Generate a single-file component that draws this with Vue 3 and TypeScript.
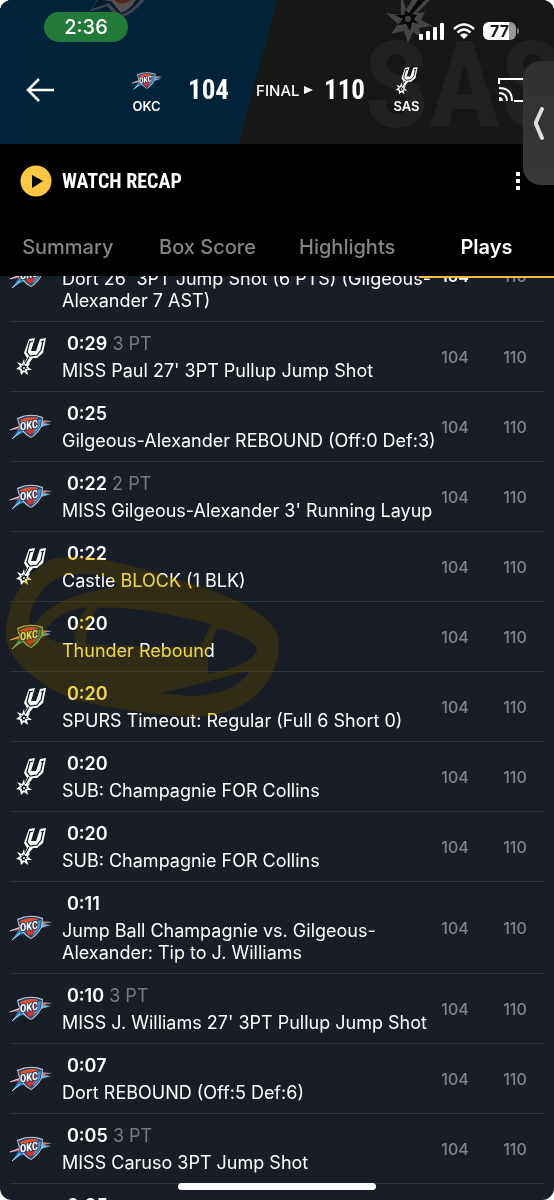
<script setup lang="ts">
interface Play {
  team: 'okc' | 'sas'
  time: string
  points?: string
  text: string
  okc: number
  sas: number
  scored?: boolean
}

const tabs = ['Summary', 'Box Score', 'Highlights', 'Plays']
const activeTab = 'Plays'

const plays: Play[] = [
  { team: 'okc', time: '0:35', points: '3 PT', text: "Dort 26' 3PT Jump Shot (6 PTS) (Gilgeous-Alexander 7 AST)", okc: 104, sas: 110, scored: true },
  { team: 'sas', time: '0:29', points: '3 PT', text: "MISS Paul 27' 3PT Pullup Jump Shot", okc: 104, sas: 110 },
  { team: 'okc', time: '0:25', text: 'Gilgeous-Alexander REBOUND (Off:0 Def:3)', okc: 104, sas: 110 },
  { team: 'okc', time: '0:22', points: '2 PT', text: "MISS Gilgeous-Alexander 3' Running Layup", okc: 104, sas: 110 },
  { team: 'sas', time: '0:22', text: 'Castle BLOCK (1 BLK)', okc: 104, sas: 110 },
  { team: 'okc', time: '0:20', text: 'Thunder Rebound', okc: 104, sas: 110 },
  { team: 'sas', time: '0:20', text: 'SPURS Timeout: Regular (Full 6 Short 0)', okc: 104, sas: 110 },
  { team: 'sas', time: '0:20', text: 'SUB: Champagnie FOR Collins', okc: 104, sas: 110 },
  { team: 'sas', time: '0:20', text: 'SUB: Champagnie FOR Collins', okc: 104, sas: 110 },
  { team: 'okc', time: '0:11', text: 'Jump Ball Champagnie vs. Gilgeous-Alexander: Tip to J. Williams', okc: 104, sas: 110 },
  { team: 'okc', time: '0:10', points: '3 PT', text: "MISS J. Williams 27' 3PT Pullup Jump Shot", okc: 104, sas: 110 },
  { team: 'okc', time: '0:07', text: 'Dort REBOUND (Off:5 Def:6)', okc: 104, sas: 110 },
  { team: 'okc', time: '0:05', points: '3 PT', text: 'MISS Caruso 3PT Jump Shot', okc: 104, sas: 110 },
  { team: 'sas', time: '0:05', text: 'SPURS Rebound', okc: 104, sas: 110 },
]
</script>

<template>
  <svg class="defs" aria-hidden="true">
    <defs>
      <symbol id="logo-okc" viewBox="0 0 42 26">
        <path d="M0 16L14 10L12 15Z" fill="#e0535a" />
        <path d="M2 25L10 13L20 16L10 20Z" fill="#2b86c5" />
        <path d="M28 6L42 7L33 9L41 10L28 14Z" fill="#6fb1dc" />
        <path d="M30 7L42 7L32 9Z" fill="#ef6a5c" />
        <path d="M2 25L10 18M0 16L11 12" stroke="#dce8f2" stroke-width="1" fill="none" />
        <path d="M7 4Q20 -2 33 3L32 12Q28 20 21 24Q9 18 7 4Z" fill="#c9ced8" />
        <path d="M8 5Q20 -1 32 4L31 12Q27 19 21 23Q11 17 8 5Z" fill="#24426e" />
        <path d="M10 6Q20 1 28 4L26 9L12 11Z" fill="#e8502f" />
        <path d="M13 14L28 8L26 16L20 21Z" fill="#d8342f" />
        <path d="M28 6L31 5L30 12Q27 18 22 21L26 14Z" fill="#3a9bd8" />
        <text x="19" y="15" text-anchor="middle" transform="rotate(-10 19 12)" font-family="Roboto Condensed, Liberation Sans, sans-serif" font-size="11" font-weight="700" font-style="italic" fill="#fff" stroke="#263450" stroke-width="1.500" paint-order="stroke">OKC</text>
      </symbol>
      <symbol id="logo-sas" viewBox="0 0 31 38">
        <path d="M13 1L19 0L15 13L20 13L24 1L30 0L27 15L21 20L17 20L10 29L7 28L11 20L8 15Z" fill="#fff" />
        <path d="M14 3L11 14L14 18L21 17L25 12L27 3" fill="none" stroke="#10141b" stroke-width="1.200" />
        <path d="M14 4L17 3M25 4L28 3M13 19L9 26" stroke="#10141b" stroke-width="1.200" />
        <path d="M8 21L9 27L14 25L12 29L16 32L11 32L12 37L8 34L5 37L4 32L0 31L4 28L1 24L6 26Z" fill="#fff" />
        <path d="M8 26L9 28L11 28L10 30L12 31L9 31L9 33L8 32L6 33L6 31L4 30L6 29L5 27L7 28Z" fill="#10141b" />
        <circle cx="8" cy="30" r="1" fill="#fff" />
      </symbol>
    </defs>
  </svg>

  <div class="screen">
    <header class="top">
      <div class="score-header">
        <div class="backdrop" aria-hidden="true">
          <div class="backdrop-okc"></div>
          <span class="backdrop-name">SAS</span>
          <svg class="ghost-okc" viewBox="0 0 66 18">
            <path d="M10 0L4 10L0 12L12 9L20 6L31 18Q45 16 58 0Z" fill="#3e434b" />
            <path d="M11 0L5 9L22 3L33 15Q44 12 53 0Z" fill="#07192c" />
            <path d="M15 0L24 1L34 13Q43 10 49 0Z" fill="#564e50" />
            <path d="M27 0Q35 7 44 0Z" fill="#53261f" />
          </svg>
          <svg class="ghost-sas" viewBox="0 0 52 44">
            <path d="M17 0L20 10L26 0H44L31 13L39 12L35 20L47 26L33 28L36 38L27 32L22 43L18 31L5 34L12 24L0 13L15 15L15 0Z" fill="#454545" />
            <path d="M32 0H39L26 14L31 15L28 19L33 24L26 22L24 31L20 24L12 25L17 19L9 15L18 15L19 10L23 13Z" fill="#090909" />
            <circle cx="22" cy="19" r="3" fill="#454545" />
          </svg>
        </div>

        <div class="status">
          <span class="clock">2:36</span>
          <div class="indicators">
            <svg class="signal" viewBox="0 0 26 17" aria-label="Signal" role="img">
              <rect x="0" y="11" width="4" height="6" rx="1" />
              <rect x="7" y="8" width="4" height="9" rx="1" />
              <rect x="14" y="4" width="4" height="13" rx="1" />
              <rect x="21" y="0" width="4" height="17" rx="1" />
            </svg>
            <svg class="wifi" viewBox="0 0 22 16" aria-label="Wi-Fi" role="img">
              <path d="M1 6Q11 -3 21 6M4.500 9.500Q11 3.500 17.500 9.500" fill="none" stroke="#fff" stroke-width="2.600" />
              <path d="M7 12Q11 8.500 15 12L11 16Z" fill="#fff" />
            </svg>
            <span class="battery">77</span>
          </div>
        </div>

        <div class="matchup">
          <div class="side">
            <button class="icon-button" type="button" aria-label="Back">
              <svg width="30" height="26" viewBox="0 0 30 26"><path d="M14 2L3 13L14 24M3 13H29" fill="none" stroke="#fff" stroke-width="2.500" /></svg>
            </button>
          </div>
          <div class="team">
            <svg class="team-okc"><use href="#logo-okc" /></svg>
            <span>OKC</span>
          </div>
          <strong class="total">104</strong>
          <div class="final">FINAL <svg width="9" height="8" viewBox="0 0 9 8"><path d="M0 0L9 4L0 8Z" fill="#fff" /></svg></div>
          <strong class="total">110</strong>
          <div class="team">
            <svg class="team-sas"><use href="#logo-sas" /></svg>
            <span>SAS</span>
          </div>
          <div class="side side-end">
            <button class="icon-button" type="button" aria-label="Cast">
              <svg width="30" height="24" viewBox="0 0 30 24" fill="none" stroke="#fff" stroke-width="2"><path d="M1 6V1H29V23H16M1 10Q14 10 14 23M1 15Q9 15 9 23" /><path d="M1 19Q5 19 5 23H1Z" fill="#fff" stroke="none" /></svg>
            </button>
          </div>
        </div>
      </div>

      <div class="recap">
        <button class="recap-button" type="button">
          <svg width="32" height="32" viewBox="0 0 32 32"><circle cx="16" cy="16" r="15.500" fill="#fdc944" /><path d="M12 10L23 16L12 23Z" fill="#050505" /></svg>
          Watch Recap
        </button>
        <button class="more" type="button" aria-label="More options">
          <svg width="4" height="18" viewBox="0 0 4 18" fill="#fff"><path d="M0 0H4V4H0ZM0 7H4V11H0ZM0 14H4V18H0Z" /></svg>
        </button>
      </div>

      <nav class="tabs">
        <a v-for="tab in tabs" :key="tab" href="#" :class="['tab', { active: tab === activeTab }]">{{ tab }}</a>
      </nav>
    </header>

    <main class="feed">
      <ol class="plays">
        <li v-for="(play, i) in plays" :key="i" class="play">
          <span class="play-logo"><svg :class="play.team"><use :href="'#logo-' + play.team" /></svg></span>
          <div class="play-body">
            <p class="play-time"><b>{{ play.time }}</b> <span v-if="play.points">{{ play.points }}</span></p>
            <p class="play-text">{{ play.text }}</p>
          </div>
          <span :class="['score', { scored: play.scored }]">{{ play.okc }}</span>
          <span class="score score-away">{{ play.sas }}</span>
        </li>
      </ol>
    </main>

    <svg v-for="layer in ['tint', 'glow']" :key="layer" :class="['marker', layer]" viewBox="0 0 290 190" aria-hidden="true">
      <path fill-rule="evenodd" d="M6 95C6 65 22 36 50 20C90 8 150 32 200 46C240 60 278 78 279 102C280 140 250 176 195 177C150 175 110 168 75 160C40 146 6 120 6 95ZM29 80C32 58 50 34 75 34C95 34 112 34 118 46C90 52 55 58 38 80C34 86 29 88 29 80ZM45 90C55 76 70 69 88 67C78 78 74 92 75 104C60 104 45 100 45 90ZM98 68C130 66 170 74 212 84L200 106C160 108 110 106 86 104C86 92 90 78 98 68ZM217 88C240 94 256 102 257 110C254 122 230 130 208 134L208 112ZM160 153C200 145 230 134 250 131C240 148 215 156 190 156Z" />
    </svg>

    <button class="drawer" type="button" aria-label="Open side panel">
      <svg width="12" height="35" viewBox="0 0 12 35"><path d="M9 3L3 16V18L9 32" fill="none" stroke="#dedee4" stroke-width="4" stroke-linecap="round" stroke-linejoin="round" /></svg>
    </button>
    <div class="home-bar"></div>
  </div>
</template>

<style>
body {
  background: #fff;
}
</style>

<style scoped>
.defs {
  position: absolute;
  width: 0;
  height: 0;
}

.screen {
  position: relative;
  height: 100vh;
  overflow: hidden;
  display: flex;
  flex-direction: column;
  border-radius: 12px;
  background: #191d25;
  color: #fff;
  font-family: Inter, "Liberation Sans", sans-serif;
}

button {
  border: 0;
  padding: 0;
  background: none;
  color: inherit;
  font: inherit;
  display: flex;
  align-items: center;
}

.top {
  position: relative;
  z-index: 1;
  flex: none;
  background: #000;
}

.score-header {
  position: relative;
  height: 144px;
  overflow: hidden;
  background: #171717;
}

.backdrop,
.backdrop-okc {
  position: absolute;
  inset: 0;
}

.backdrop-okc {
  background: linear-gradient(90deg, #00243b, #012238 40%, #06273c);
  clip-path: polygon(0 0, 50% 0, 43% 100%, 0 100%);
}

.backdrop-name {
  position: absolute;
  left: 364px;
  top: 14px;
  color: #212121;
  font: 700 120px/144px "Roboto Condensed", Roboto, sans-serif;
}

.ghost-okc {
  position: absolute;
  left: 87px;
  top: 0;
  width: 66px;
  height: 18px;
}

.ghost-sas {
  position: absolute;
  left: 386px;
  top: 0;
  width: 52px;
  height: 44px;
}

.status {
  position: relative;
  display: flex;
  justify-content: space-between;
  padding: 12px 38px 0 44px;
}

.clock {
  width: 84px;
  height: 30px;
  border-radius: 15px;
  background: #217a37;
  font-size: 20px;
  font-weight: 500;
  line-height: 30px;
  text-align: center;
}

.indicators {
  display: flex;
  align-items: center;
  gap: 8px;
  height: 38px;
  fill: #fff;
}

.signal {
  width: 26px;
  height: 17px;
}

.wifi {
  width: 22px;
  height: 16px;
}

.battery {
  position: relative;
  width: 33px;
  height: 18px;
  border-radius: 6px;
  background: linear-gradient(90deg, #fff 78%, #979797 78%);
  color: #1a1a1a;
  font-size: 16px;
  font-weight: 700;
  line-height: 18px;
  text-align: center;
}

.battery::after {
  content: "";
  position: absolute;
  left: 34px;
  top: 6px;
  width: 2px;
  height: 6px;
  border-radius: 0 2px 2px 0;
  background: #777;
}

.matchup {
  position: relative;
  display: flex;
  align-items: center;
  height: 80px;
}

.side {
  flex: 1;
  display: flex;
  padding-left: 25px;
}

.side-end {
  justify-content: flex-end;
  padding: 0 26px 0 0;
}

.team {
  width: 60px;
  display: flex;
  flex-direction: column;
  align-items: center;
  font-size: 13px;
  font-weight: 600;
  line-height: 16px;
}

.team-okc {
  width: 30px;
  height: 20px;
  margin: 5px 0 7px;
}

.team-sas {
  width: 24px;
  height: 28px;
  margin: 1px 0 3px;
}

.total {
  width: 64px;
  text-align: center;
  font: 700 27px/32px "Roboto Condensed", Roboto, sans-serif;
}

.final {
  width: 72px;
  display: flex;
  align-items: center;
  justify-content: flex-end;
  gap: 4px;
  font-size: 15px;
  font-weight: 500;
}

.recap {
  display: flex;
  align-items: center;
  justify-content: space-between;
  height: 74px;
  padding: 0 34px 0 20px;
}

.recap-button {
  gap: 10px;
  font: 700 20px/28px "Roboto Condensed", Roboto, sans-serif;
  text-transform: uppercase;
}

.tabs {
  display: grid;
  grid-template-columns: 1fr 1fr 1fr 135px;
  height: 58px;
}

.tab {
  box-sizing: border-box;
  padding-right: 4px;
  border-bottom: 2px solid transparent;
  color: #858589;
  font-size: 20px;
  font-weight: 500;
  line-height: 58px;
  text-align: center;
  text-decoration: none;
}

.tab.active {
  padding: 0;
  border-color: #f5be3f;
  color: #fff;
  font-weight: 600;
}

.feed {
  flex: 1;
  display: flex;
  flex-direction: column;
  min-height: 0;
}

.plays {
  list-style: none;
  margin: -46px 10px 0;
  padding: 0;
}

.play {
  display: grid;
  grid-template-columns: 42px 1fr 30px 60px;
  align-items: center;
  padding-right: 14px;
  border-bottom: 1px solid #30343c;
}

.play-logo {
  display: flex;
  justify-content: center;
}

.okc {
  width: 42px;
  height: 26px;
}

.sas {
  width: 31px;
  height: 38px;
}

.play-body {
  padding: 10px 0 9px 10px;
}

.play-time,
.play-text {
  margin: 0;
  font-size: 18px;
  line-height: 22px;
}

.play-time {
  margin-bottom: 4px;
  padding-left: 5px;
  line-height: 24px;
}

.play-time b {
  font-weight: 600;
}

.play-time span {
  color: #787b82;
}

.score {
  color: #81848a;
  font-size: 16px;
  font-weight: 500;
  text-align: center;
}

.score-away {
  padding-left: 30px;
}

.scored {
  color: #fff;
  font-weight: 600;
}

.marker {
  position: absolute;
  left: 0;
  top: 540px;
  width: 290px;
  height: 190px;
  pointer-events: none;
}

.tint {
  fill: #ecd048;
  mix-blend-mode: multiply;
}

.glow {
  fill: #1b160a;
  mix-blend-mode: screen;
}

.drawer {
  position: absolute;
  z-index: 2;
  right: 0;
  top: 61px;
  width: 31px;
  height: 124px;
  justify-content: center;
  border-radius: 18px 0 0 18px;
  background: linear-gradient(#303030, #383838);
}

.home-bar {
  position: absolute;
  z-index: 2;
  left: 50%;
  bottom: 10px;
  width: 198px;
  height: 7px;
  border-radius: 4px;
  background: #fff;
  transform: translateX(-50%);
}
</style>
